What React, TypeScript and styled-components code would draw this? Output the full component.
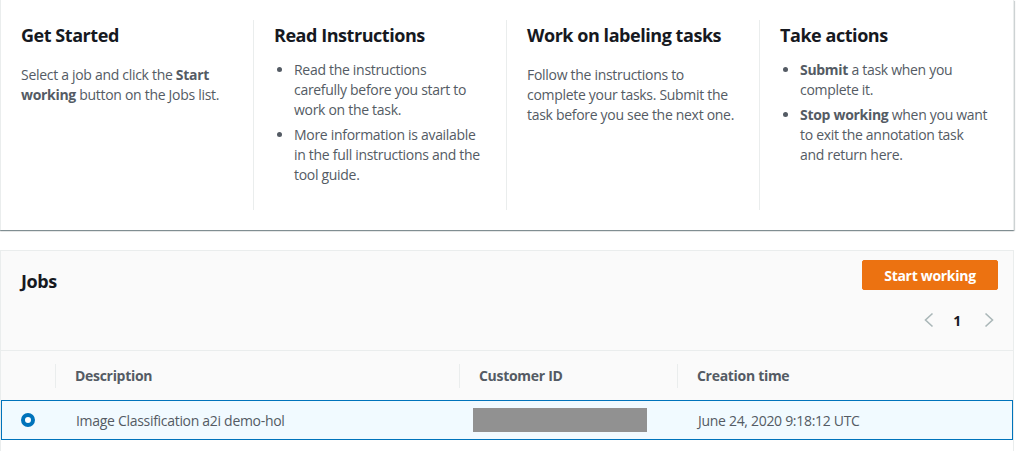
import React from "react";
import styled, { createGlobalStyle } from "styled-components";

const Global = createGlobalStyle`
  html, body { margin: 0; padding: 0; background: #ffffff; }
  body {
    font-family: "Open Sans", "Noto Sans", Arial, sans-serif;
    font-size: 14px;
    letter-spacing: -0.3px;
    color: #545b64;
    width: 1024px;
    height: 451px;
    overflow: hidden;
  }
  * { box-sizing: border-box; }
`;

const Page = styled.div`
  display: flex;
  flex-direction: column;
  gap: 20px;
  padding-right: 10px;
`;

const InfoCard = styled.section`
  background: #ffffff;
  border-left: 1px solid #eaeded;
  border-right: 1px solid #eaeded;
  box-shadow: 0 1px 1px 0 rgba(0, 28, 36, 0.3), 1px 1px 1px 0 rgba(0, 28, 36, 0.15),
    -1px 1px 1px 0 rgba(0, 28, 36, 0.15);
  padding: 20px 0 20px;
  display: grid;
  grid-template-columns: 252px 253px 253px 1fr;
`;

const Column = styled.div<{ $divider?: boolean }>`
  border-left: ${(p) => (p.$divider ? "1px solid #eaeded" : "none")};
  padding: 4px 20px 0 20px;
  min-height: 190px;
`;

const ColTitle = styled.h2`
  margin: 0;
  font-size: 18px;
  line-height: 22px;
  font-weight: 700;
  letter-spacing: -0.45px;
  color: #16191f;
`;

const Para = styled.p`
  margin: 19px 0 0;
  line-height: 20px;
`;

const List = styled.ul`
  margin: 14px 0 0;
  padding: 0 4px 0 20px;
  line-height: 20px;
`;

const Item = styled.li`
  margin-bottom: 5px;
`;

const Strong = styled.b`
  font-weight: 700;
`;

const JobsCard = styled.section`
  background: #ffffff;
  border: 1px solid #eaeded;
  border-bottom: none;
  height: 220px;
`;

const JobsHeader = styled.div`
  background: #fafafa;
  padding: 9px 15px 18px 20px;
  display: flex;
  flex-direction: column;
`;

const HeaderTop = styled.div`
  display: flex;
  justify-content: space-between;
  align-items: flex-start;
`;

const JobsTitle = styled.h2`
  margin: 10px 0 0;
  font-size: 18px;
  line-height: 22px;
  font-weight: 700;
  letter-spacing: -0.45px;
  color: #16191f;
`;

const PrimaryButton = styled.button`
  height: 30px;
  width: 136px;
  background: #ec7211;
  border: 1px solid #ec7211;
  border-radius: 2px;
  color: #ffffff;
  font-family: inherit;
  font-size: 14px;
  letter-spacing: -0.3px;
  font-weight: 700;
  padding: 0;
  cursor: pointer;
`;

const Pager = styled.div`
  align-self: flex-end;
  margin-top: 16px;
  margin-right: 4px;
  display: flex;
  align-items: center;
  height: 24px;
`;

const PageNum = styled.span`
  font-weight: 700;
  color: #16191f;
  font-size: 14px;
  width: 14px;
  margin: 0 20px 0 16px;
  text-align: center;
`;

const Grid = styled.div`
  display: grid;
  grid-template-columns: 54px 404px 218px 1fr;
  align-items: center;
`;

const HeadRow = styled(Grid)`
  background: #fafafa;
  border-top: 1px solid #eaeded;
  height: 50px;
`;

const HeadCell = styled.div<{ $divider?: boolean }>`
  height: 24px;
  line-height: 24px;
  border-left: ${(p) => (p.$divider ? "1px solid #eaeded" : "none")};
  padding-left: 19px;
  font-weight: 700;
  color: #545b64;
`;

const BodyRow = styled(Grid)`
  background: #f1faff;
  border: 1px solid #0073bb;
  height: 40px;
`;

const Cell = styled.div`
  padding-left: 20px;
  color: #545b64;
  display: flex;
  align-items: center;
`;

const RadioCell = styled.div`
  padding-left: 19px;
  display: flex;
  align-items: center;
`;

const Radio = styled.span`
  width: 14px;
  height: 14px;
  border-radius: 50%;
  border: 4px solid #0073bb;
  background: #ffffff;
`;

const Redacted = styled.span`
  display: block;
  width: 174px;
  height: 24px;
  background: #919191;
  margin-left: -7px;
`;

const Chevron = ({ dir }: { dir: "left" | "right" }) => (
  <svg width="10" height="16" viewBox="0 0 10 16">
    <path
      d={dir === "left" ? "M8.5 1.5 L1.5 8 L8.5 14.5" : "M1.5 1.5 L8.5 8 L1.5 14.5"}
      fill="none"
      stroke="#aab7b8"
      strokeWidth="1.6"
    />
  </svg>
);

export default function App() {
  return (
    <>
      <Global />
      <Page>
        <InfoCard>
          <Column>
            <ColTitle>Get Started</ColTitle>
            <Para>
              Select a job and click the <Strong>Start working</Strong> button on the Jobs list.
            </Para>
          </Column>
          <Column $divider>
            <ColTitle>Read Instructions</ColTitle>
            <List>
              <Item>Read the instructions carefully before you start to work on the task.</Item>
              <Item>More information is available in the full instructions and the tool guide.</Item>
            </List>
          </Column>
          <Column $divider>
            <ColTitle>Work on labeling tasks</ColTitle>
            <Para>
              Follow the instructions to complete your tasks. Submit the task before you see the
              next one.
            </Para>
          </Column>
          <Column $divider>
            <ColTitle>Take actions</ColTitle>
            <List>
              <Item>
                <Strong>Submit</Strong> a task when you complete it.
              </Item>
              <Item>
                <Strong>Stop working</Strong> when you want to exit the annotation task and return
                here.
              </Item>
            </List>
          </Column>
        </InfoCard>

        <JobsCard>
          <JobsHeader>
            <HeaderTop>
              <JobsTitle>Jobs</JobsTitle>
              <PrimaryButton>Start working</PrimaryButton>
            </HeaderTop>
            <Pager>
              <Chevron dir="left" />
              <PageNum>1</PageNum>
              <Chevron dir="right" />
            </Pager>
          </JobsHeader>
          <HeadRow>
            <HeadCell />
            <HeadCell $divider>Description</HeadCell>
            <HeadCell $divider>Customer ID</HeadCell>
            <HeadCell $divider>Creation time</HeadCell>
          </HeadRow>
          <BodyRow>
            <RadioCell>
              <Radio />
            </RadioCell>
            <Cell>Image Classification a2i demo-hol</Cell>
            <Cell>
              <Redacted />
            </Cell>
            <Cell>June 24, 2020 9:18:12 UTC</Cell>
          </BodyRow>
        </JobsCard>
      </Page>
    </>
  );
}
